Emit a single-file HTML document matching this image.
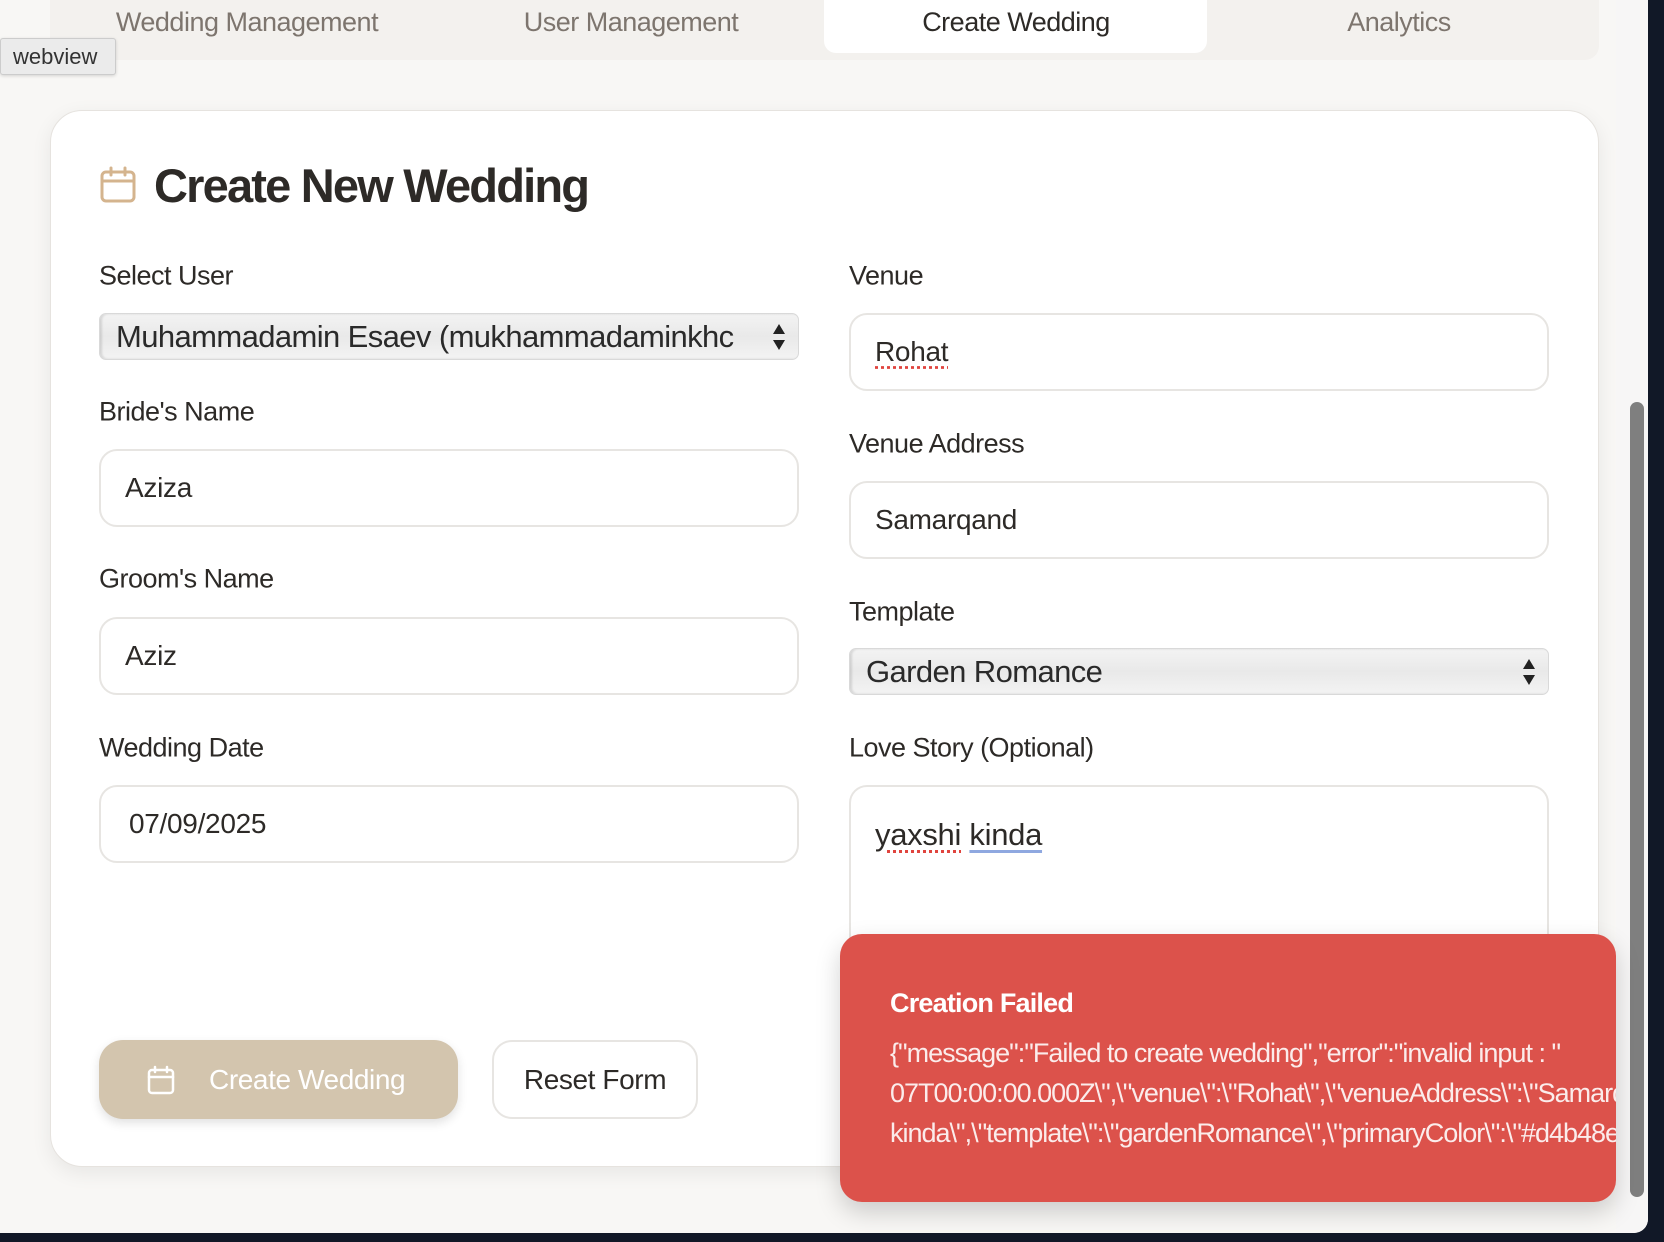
<!DOCTYPE html>
<html><head><meta charset="utf-8"><style>
*{box-sizing:border-box;margin:0;padding:0}
body{width:1664px;height:1242px;background:#111827;position:relative;overflow:hidden;font-family:"Liberation Sans",sans-serif;color:#2d2a27}
.page{position:absolute;left:0;top:0;width:1648px;height:1233px;background:#f8f7f5;border-bottom-right-radius:14px;overflow:hidden}
.tabs{position:absolute;left:50px;top:0;width:1549px;height:60px;background:#f3f1ee;border-radius:0 0 14px 14px}
.tab{position:absolute;top:0;height:60px;line-height:44px;font-size:27px;color:#7d756e;transform:translateX(-50%);white-space:nowrap;letter-spacing:-0.5px}
.tabact{position:absolute;left:824px;top:0;width:383px;height:53px;background:#fff;border-radius:0 0 12px 12px}
.wv{position:absolute;left:0;top:38px;width:116px;height:37px;background:#ebebeb;border:1px solid #ccc;border-radius:3px;font-size:22px;line-height:35px;padding-left:12px;color:#333;box-shadow:0 1px 3px rgba(0,0,0,.15)}
.card{position:absolute;left:50px;top:110px;width:1549px;height:1057px;background:#fff;border:1px solid #e6e3df;border-radius:32px;box-shadow:0 6px 20px rgba(0,0,0,.07)}
.title{position:absolute;left:154px;top:158px;font-size:47px;font-weight:bold;letter-spacing:-1.8px;color:#2d2a27}
.lbl{position:absolute;font-size:27px;color:#2d2a27;letter-spacing:-0.5px;transform:translateY(-50%)}
.inp{position:absolute;width:700px;height:78px;border:2px solid #e7e5e2;border-radius:18px;background:#fff;font-size:28px;padding-left:24px;line-height:74px;color:#2d2a27;letter-spacing:-0.3px}
.sel{position:absolute;width:700px;height:47px;border:1px solid #d9d9d9;border-radius:7px;background:linear-gradient(#f3f3f3,#e9e9e9 50%,#f3f3f3);font-size:31px;padding-left:16px;line-height:45px;color:#2a2a2a;white-space:nowrap;overflow:hidden;box-shadow:inset 2px 0 2px rgba(0,0,0,.12);letter-spacing:-0.6px}
.arr{position:absolute;right:12px;top:8px;width:14px;height:30px}
.btn1{position:absolute;left:99px;top:1040px;width:359px;height:79px;background:#d3c5ae;border-radius:24px;color:#fff;font-size:28px;line-height:79px;padding-left:110px;box-shadow:0 4px 10px rgba(0,0,0,.12);letter-spacing:-0.4px}
.btn2{position:absolute;left:492px;top:1040px;width:206px;height:79px;border:2px solid #e7e5e2;border-radius:20px;font-size:28px;line-height:75px;text-align:center;background:#fff;letter-spacing:-0.4px}
.toast{position:absolute;left:840px;top:934px;width:776px;height:268px;background:#dc524b;border-radius:22px;color:#fff;overflow:hidden;padding:54px 0 0 50px;box-shadow:0 10px 25px rgba(0,0,0,.18)}
.toast h3{font-size:27px;font-weight:bold;letter-spacing:-0.8px;margin-bottom:14px}
.toast p{font-size:27px;line-height:40px;white-space:nowrap;letter-spacing:-1px;color:#fbeceb}
.sb{position:absolute;left:1630px;top:402px;width:14px;height:795px;background:#7f7f7f;border-radius:7px}
.sbt{position:absolute;left:1616px;top:0;width:32px;height:1233px;background:#f7f6f6}
.sp{text-decoration:underline dotted #e0443e;text-underline-offset:5px}
</style></head><body>
<div class="page">
<div class="tabs"></div>
<div class="tabact"></div>
<div class="tab" style="left:247px">Wedding Management</div>
<div class="tab" style="left:631px">User Management</div>
<div class="tab" style="left:1016px;color:#2d2a27">Create Wedding</div>
<div class="tab" style="left:1399px">Analytics</div>
<div class="wv">webview</div>
<div class="sbt"></div>
<div class="sb"></div>
<div class="card"></div>
<svg style="position:absolute;left:100px;top:166px" width="36" height="37" viewBox="0 0 36 37" fill="none" stroke="#d4b48e" stroke-width="3" stroke-linecap="round"><rect x="2" y="6" width="32" height="29" rx="4"/><line x1="2" y1="15" x2="34" y2="15"/><line x1="11" y1="2" x2="11" y2="9"/><line x1="25" y1="2" x2="25" y2="9"/></svg>
<div class="title">Create New Wedding</div>

<div class="lbl" style="left:99px;top:276px">Select User</div>
<div class="sel" style="left:99px;top:313px">Muhammadamin Esaev (mukhammadaminkhc<svg class="arr" viewBox="0 0 14 30"><path d="M7 2L13 12H1Z M7 28L13 18H1Z" fill="#222"/></svg></div>
<div class="lbl" style="left:99px;top:412px">Bride's Name</div>
<div class="inp" style="left:99px;top:449px">Aziza</div>
<div class="lbl" style="left:99px;top:579px">Groom's Name</div>
<div class="inp" style="left:99px;top:617px">Aziz</div>
<div class="lbl" style="left:99px;top:748px">Wedding Date</div>
<div class="inp" style="left:99px;top:785px;padding-left:28px">07/09/2025</div>

<div class="lbl" style="left:849px;top:276px">Venue</div>
<div class="inp" style="left:849px;top:313px"><span class="sp">Rohat</span></div>
<div class="lbl" style="left:849px;top:444px">Venue Address</div>
<div class="inp" style="left:849px;top:481px">Samarqand</div>
<div class="lbl" style="left:849px;top:612px">Template</div>
<div class="sel" style="left:849px;top:648px">Garden Romance<svg class="arr" viewBox="0 0 14 30"><path d="M7 2L13 12H1Z M7 28L13 18H1Z" fill="#222"/></svg></div>
<div class="lbl" style="left:849px;top:748px">Love Story (Optional)</div>
<div class="inp" style="left:849px;top:785px;height:300px;line-height:1;padding-top:32px;font-size:31px"><span class="sp">yaxshi</span> <span style="text-decoration:underline solid #8fa8e0;text-underline-offset:5px">kinda</span></div>

<div class="btn1"><svg style="position:absolute;left:48px;top:25px" width="28" height="30" viewBox="0 0 28 30" fill="none" stroke="#fff" stroke-width="2.5" stroke-linecap="round"><rect x="2" y="5" width="24" height="23" rx="3"/><line x1="2" y1="12" x2="26" y2="12"/><line x1="8" y1="2" x2="8" y2="7"/><line x1="20" y1="2" x2="20" y2="7"/></svg>Create Wedding</div>
<div class="btn2">Reset Form</div>

<div class="toast"><h3>Creation Failed</h3>
<p>{"message":"Failed to create wedding","error":"invalid input : "</p>
<p>07T00:00:00.000Z\",\"venue\":\"Rohat\",\"venueAddress\":\"Samarqand</p>
<p>kinda\",\"template\":\"gardenRomance\",\"primaryColor\":\"#d4b48e</p></div>
</div>
</body></html>
